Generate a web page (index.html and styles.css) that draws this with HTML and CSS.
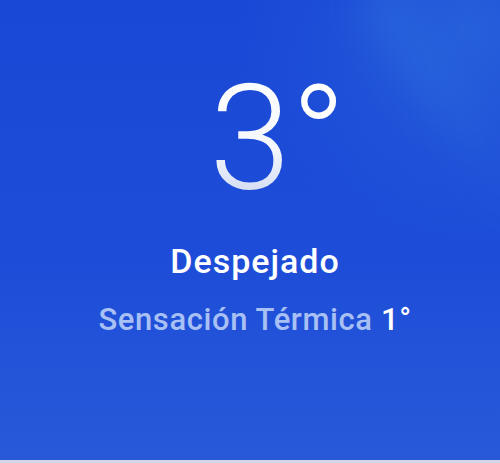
FILE: index.html
```html
<!DOCTYPE html>
<html lang="es">

<head>
    <meta charset="UTF-8">
    <meta name="viewport" content="width=device-width, initial-scale=1.0">
    <title>Tiempo</title>
    <link rel="stylesheet" href="styles.css">
</head>

<body>

    <div id="weather_card">
        <div class="glow"></div>
        <div class="glow_ray"></div>
        <div class="temp_row">
            <span class="temp">3<span class="deg">°</span></span>
        </div>
        <div class="condition">Despejado</div>
        <div class="feels">Sensación Térmica <span class="feels_value">1°</span></div>
    </div>

</body>

</html>
```

FILE: styles.css
```css
*{
    box-sizing: border-box;
}

body{
    margin: 0;
    font-family: Roboto, "Noto Sans", sans-serif;
    background-color: #d3d7ea;
}

#weather_card{
    position: relative;
    overflow: hidden;
    height: 460px;
    display: flex;
    flex-direction: column;
    align-items: center;
    padding-top: 66px;
    background: linear-gradient(180deg, #1a48d6 0%, #1d4dd8 55%, #2859d9 100%);
}

/* soft light in the top right corner */
.glow{
    position: absolute;
    top: -190px;
    right: -200px;
    width: 460px;
    height: 440px;
    border-radius: 50%;
    background: radial-gradient(closest-side, rgba(55, 130, 225, 0.4), rgba(45, 110, 222, 0.16) 60%, rgba(40, 100, 220, 0) 100%);
}

.glow_ray{
    position: absolute;
    top: -30px;
    right: 20px;
    width: 50px;
    height: 280px;
    transform: rotate(-35deg);
    background: linear-gradient(180deg, rgba(60, 140, 228, 0.2), rgba(60, 140, 228, 0));
    filter: blur(16px);
}

.temp_row{
    position: relative;
}

.temp{
    position: relative;
    display: block;
    font-size: 147px;
    font-weight: 300;
    line-height: 1;
    color: #ffffff;
    background: linear-gradient(180deg, #ffffff 0%, #f4f7fd 55%, #c6d2ef 100%);
    -webkit-background-clip: text;
    background-clip: text;
    -webkit-text-fill-color: transparent;
}

.deg{
    position: absolute;
    left: 100%;
    top: 0;
    -webkit-text-fill-color: #ffffff;
}

.condition{
    margin-top: 28px;
    margin-left: 10px;
    font-size: 34px;
    line-height: 1.2;
    font-weight: 500;
    color: #ffffff;
    letter-spacing: 1px;
}

.feels{
    margin-top: 19px;
    margin-left: 10px;
    font-size: 31px;
    line-height: 1.2;
    font-weight: 500;
    color: #a8c0f4;
    letter-spacing: 0.6px;
}

.feels_value{
    color: #ffffff;
}
```
